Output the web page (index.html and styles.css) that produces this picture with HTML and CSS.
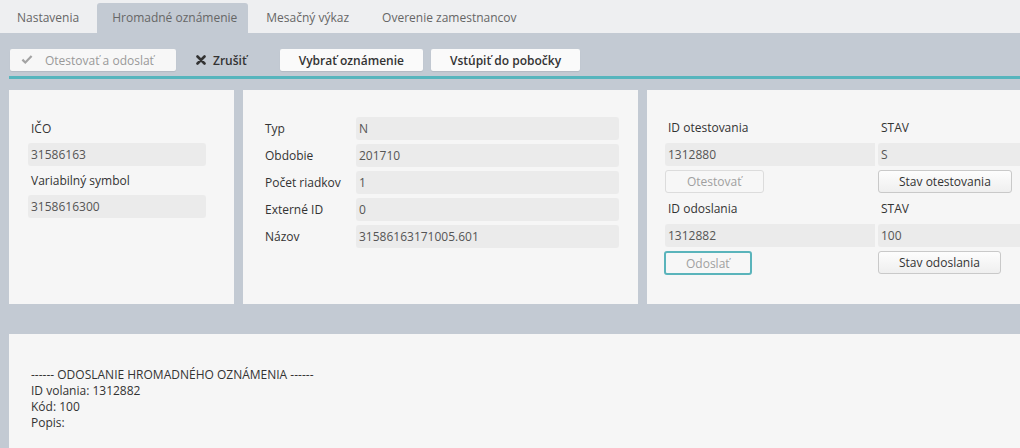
FILE: index.html
```html
<!DOCTYPE html>
<html lang="sk">
<head>
    <meta charset="UTF-8">
    <title>Hromadné oznámenie</title>
    <link rel="stylesheet" href="styles.css">
</head>
<body>
    <div class="page">
        <div class="tabs">
            <div class="tab">Nastavenia</div>
            <div class="tab active">Hromadné oznámenie</div>
            <div class="tab">Mesačný výkaz</div>
            <div class="tab">Overenie zamestnancov</div>
        </div>

        <div class="toolbar">
            <div class="toolbar-buttons">
                <button class="tbtn disabled">
                    <svg class="ico" width="12" height="10" viewBox="0 0 12 10"><path d="M0.6 5.4 L4.3 9 L11.4 1.8 L9.8 0.3 L4.3 5.9 L2.2 3.8 Z" fill="#a3a3a3"/></svg>
                    Otestovať a odoslať
                </button>
                <button class="tbtn plain">
                    <svg class="ico" width="10" height="10" viewBox="0 0 10 10"><path d="M1.5 1.5 L8.5 8.5 M8.5 1.5 L1.5 8.5" stroke="#333" stroke-width="2.6" stroke-linecap="round"/></svg>
                    Zrušiť
                </button>
                <button class="tbtn strong">Vybrať oznámenie</button>
                <button class="tbtn strong">Vstúpiť do pobočky</button>
            </div>
            <div class="accent-line"></div>
        </div>

        <div class="main">
            <div class="panels">
                <div class="panel panel-company">
                    <div class="label">IČO</div>
                    <div class="field">31586163</div>
                    <div class="label">Variabilný symbol</div>
                    <div class="field">3158616300</div>
                </div>

                <div class="panel panel-notice">
                    <div class="row"><div class="row-label">Typ</div><div class="field">N</div></div>
                    <div class="row"><div class="row-label">Obdobie</div><div class="field">201710</div></div>
                    <div class="row"><div class="row-label">Počet riadkov</div><div class="field">1</div></div>
                    <div class="row"><div class="row-label">Externé ID</div><div class="field">0</div></div>
                    <div class="row"><div class="row-label">Názov</div><div class="field">31586163171005.601</div></div>
                </div>

                <div class="panel panel-status">
                    <div class="label">ID otestovania</div>
                    <div class="label">STAV</div>
                    <div class="field">1312880</div>
                    <div class="field">S</div>
                    <div><button class="btn disabled">Otestovať</button></div>
                    <div><button class="btn">Stav otestovania</button></div>
                    <div class="label">ID odoslania</div>
                    <div class="label">STAV</div>
                    <div class="field">1312882</div>
                    <div class="field">100</div>
                    <div><button class="btn disabled focused">Odoslať</button></div>
                    <div><button class="btn">Stav odoslania</button></div>
                </div>
            </div>

            <div class="panel panel-log">
                <div>------ ODOSLANIE HROMADNÉHO OZNÁMENIA ------</div>
                <div>ID volania: 1312882</div>
                <div>Kód: 100</div>
                <div>Popis:</div>
            </div>
        </div>
    </div>
</body>
</html>
```

FILE: styles.css
```css
/* Base */
* {
    margin: 0;
    padding: 0;
    box-sizing: border-box;
    font-family: "Open Sans", Arial, sans-serif;
}

body {
    width: 1020px;
    height: 448px;
    overflow: hidden;
    background: #c3cad3;
    font-size: 12px;
    color: #333;
}

.page {
    width: 1020px;
    overflow: hidden;
}

/* Tabs */
.tabs {
    display: flex;
    align-items: flex-end;
    gap: 3px;
    height: 33px;
    padding-left: 2px;
    background: #eeeff1;
}

.tab {
    height: 30px;
    line-height: 30px;
    padding: 0 15px;
    font-size: 12px;
    color: #666;
    border-radius: 3px 3px 0 0;
}

.tab.active {
    background: #c3cad3;
    padding: 0 11px 0 15px;
}

/* Toolbar */
.toolbar {
    padding-top: 16px;
}

.toolbar-buttons {
    display: flex;
    align-items: center;
    padding-left: 10px;
}

.tbtn {
    display: flex;
    align-items: center;
    height: 22px;
    padding: 0 19px;
    margin-right: 8px;
    border: none;
    border-radius: 2px;
    background: #fafafa;
    box-shadow: 0 1px 1px rgba(0,0,0,0.08);
    font-size: 12px;
    color: #333;
}

.tbtn.disabled {
    width: 166px;
    padding: 0 0 0 11px;
    color: #999;
    background: #f7f7f7;
    margin-right: 20px;
}

.tbtn.plain {
    background: none;
    box-shadow: none;
    padding: 0;
    margin-right: 33px;
    font-weight: 600;
}

.tbtn.strong {
    font-weight: 600;
}

.ico {
    margin-right: 7px;
}

.tbtn.disabled .ico {
    margin-right: 12px;
}

.accent-line {
    height: 3px;
    margin: 5px 0 0 9px;
    background: #56b5bd;
}

/* Panels */
.main {
    padding: 11px 0 0 9px;
}

.panels {
    display: flex;
    gap: 9px;
    height: 214px;
}

.panel {
    flex-shrink: 0;
    background: #f6f6f6;
}

.label {
    height: 23px;
    line-height: 23px;
    padding-left: 3px;
    color: #333;
}

.field {
    height: 23px;
    line-height: 23px;
    padding-left: 3px;
    border-radius: 3px;
    background: #ebebeb;
    color: #555;
}

.panel-company {
    width: 225px;
    padding: 27px 28px 0 19px;
}

.panel-company .label,
.panel-company .field {
    margin-bottom: 3px;
}

.panel-notice {
    width: 395px;
    padding: 27px 19px 0 22px;
}

.row {
    display: flex;
    align-items: center;
    margin-bottom: 4px;
}

.row-label {
    width: 91px;
}

.row .field {
    flex: 1;
}

.panel-status {
    width: 420px;
    padding: 26px 0 0 18px;
    display: grid;
    grid-template-columns: 210px 210px;
    grid-auto-rows: 23px;
    column-gap: 3px;
    row-gap: 4px;
    align-content: start;
}

.panel-status .field {
    border-radius: 3px 0 0 3px;
}

/* Buttons */
.btn {
    height: 23px;
    padding: 0 20px;
    border: 1px solid #c9c9c9;
    border-radius: 3px;
    background: linear-gradient(#fdfdfd, #efefef);
    font-size: 12px;
    color: #333;
}

.btn.disabled {
    background: #f7f7f7;
    border-color: #dcdcdc;
    color: #a0a0a0;
    padding: 0 21px;
}

.btn.focused {
    border: 2px solid #5ab4bb;
    height: 24px;
    padding: 0 20px;
    margin-left: -1px;
}

/* Log */
.panel-log {
    width: 1011px;
    height: 114px;
    margin-top: 30px;
    padding: 33px 0 0 22px;
    line-height: 16px;
}
```
